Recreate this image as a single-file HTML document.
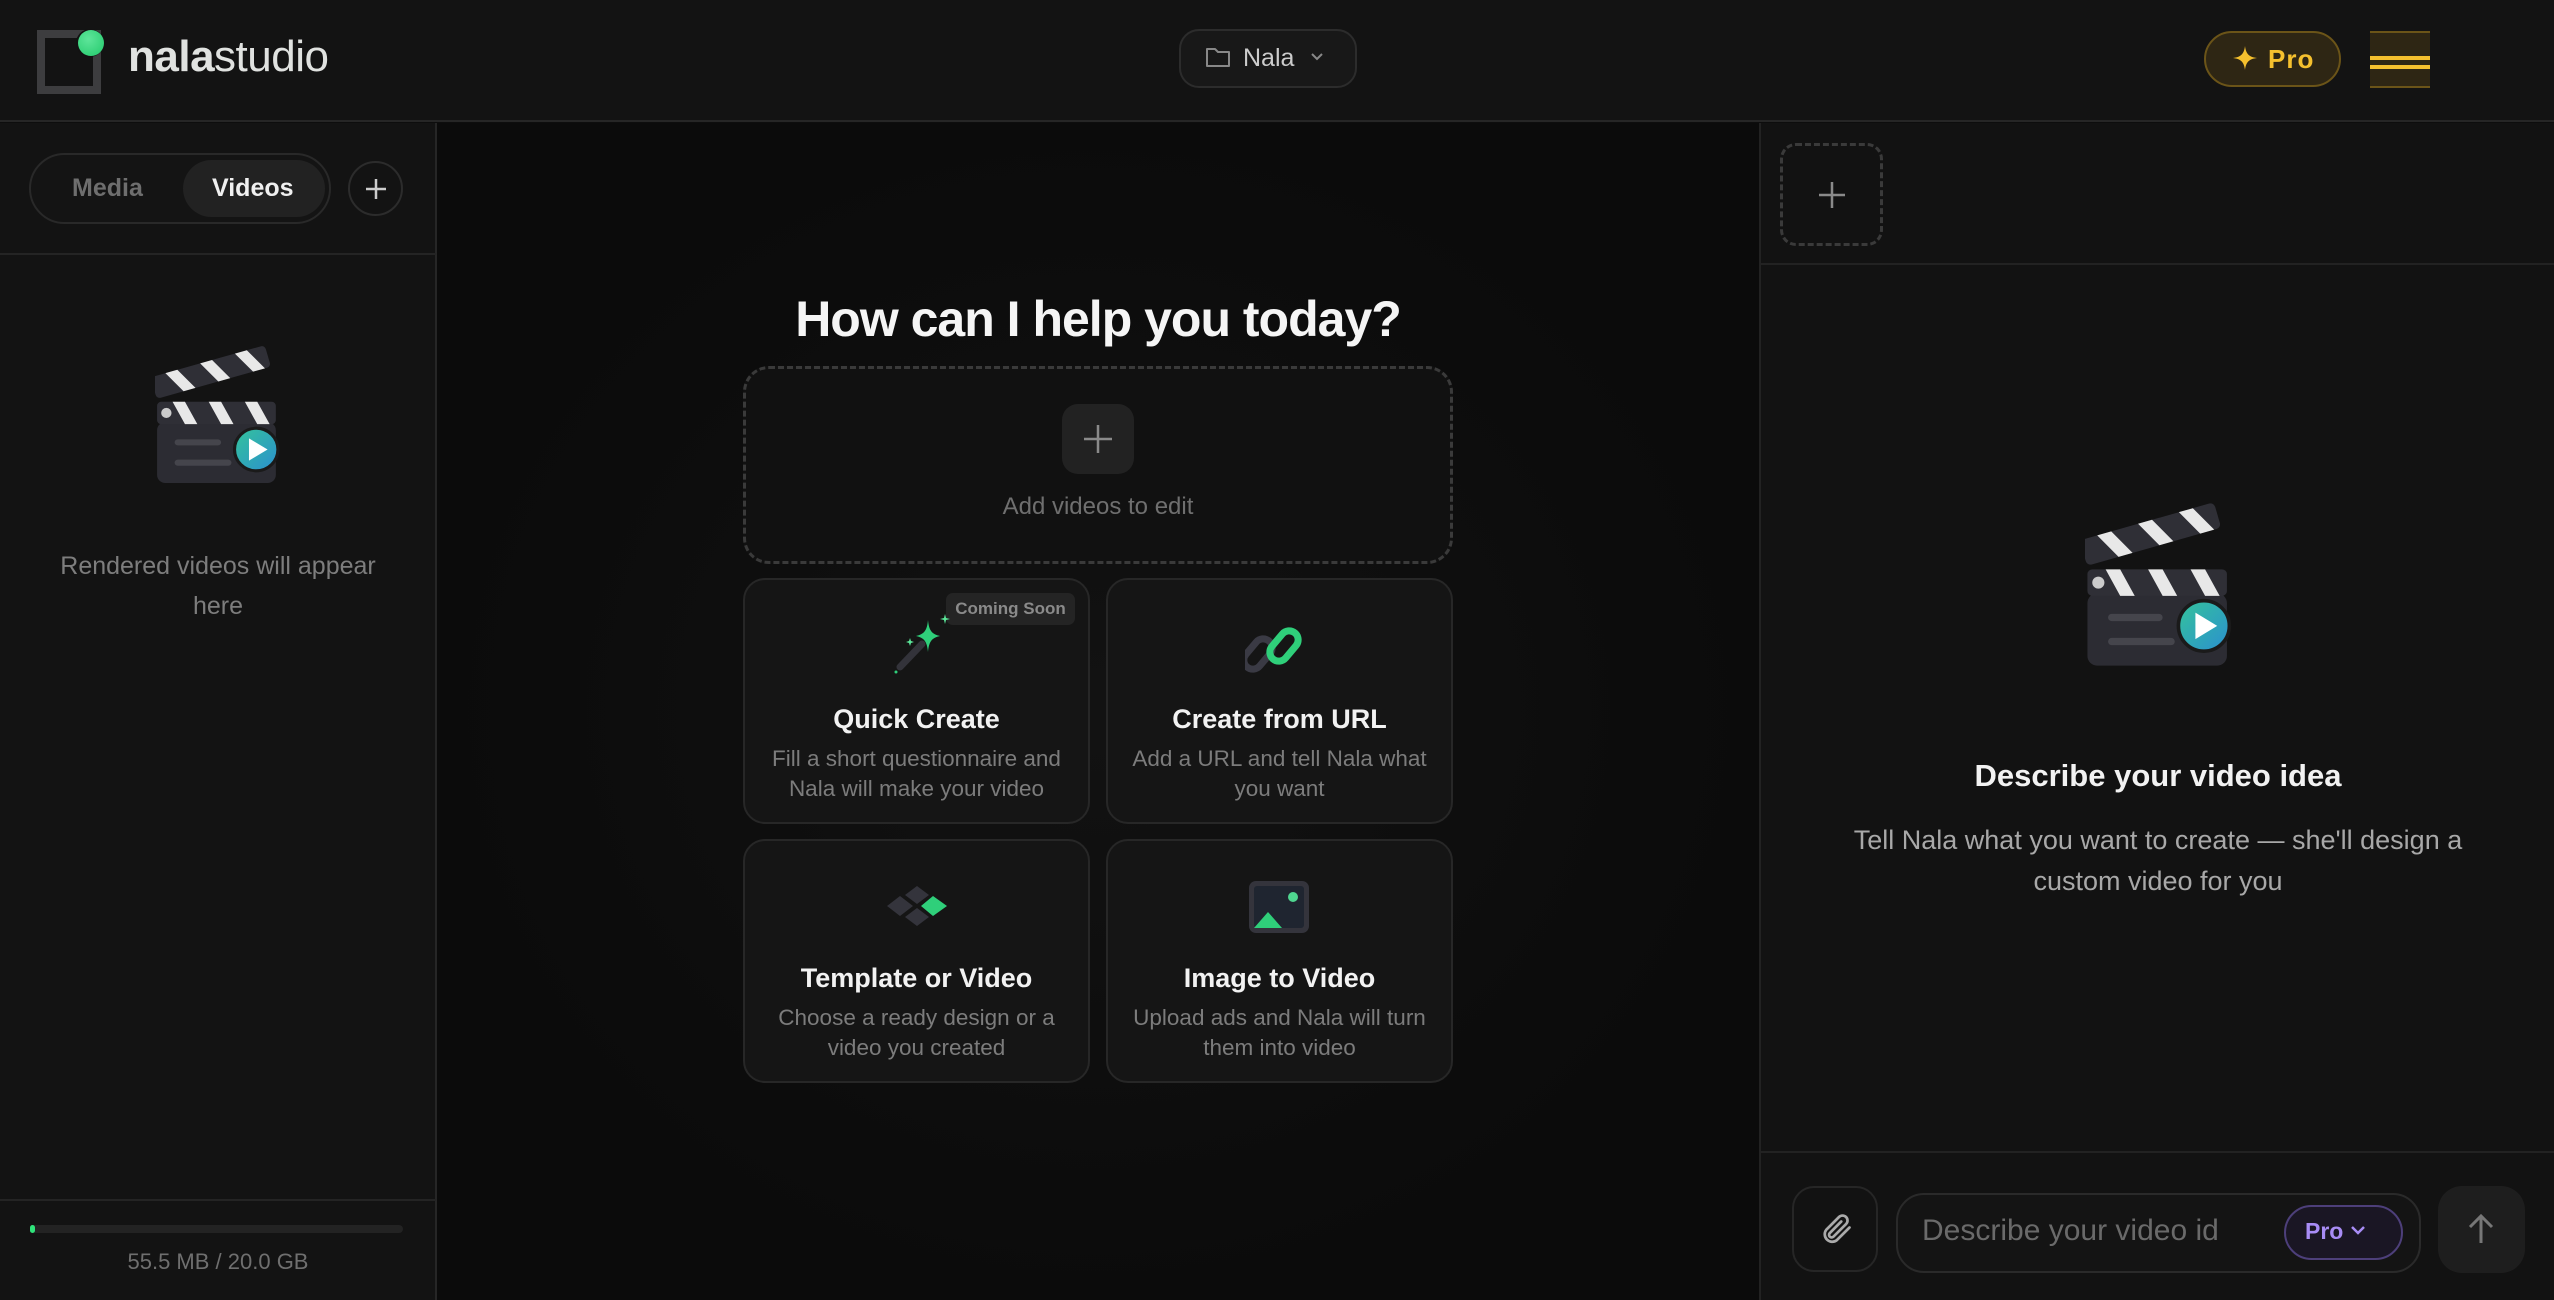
<!DOCTYPE html>
<html><head><meta charset="utf-8"><style>
*{box-sizing:border-box;margin:0;padding:0}
body{width:2554px;height:1300px;overflow:hidden;background:#0d0d0d;font-family:"Liberation Sans",sans-serif;color:#eee;position:relative}
.abs{position:absolute}
.hdr{left:0;top:0;width:2554px;height:122px;background:#131313;border-bottom:2px solid #262626}
.side{left:0;top:123px;width:437px;height:1177px;background:#131313;border-right:2px solid #262626}
.right{left:1759px;top:123px;width:795px;height:1177px;background:#121212;border-left:2px solid #222}
.center{left:437px;top:123px;width:1322px;height:1177px;background:radial-gradient(ellipse at 50% 50%,#121212,#0b0b0b 70%)}
.card{width:347px;background:#151515;border:2px solid #272727;border-radius:22px;text-align:center}
.card h3{position:absolute;left:0;right:0;font-size:27px;font-weight:bold;color:#f2f2f2}
.card p{position:absolute;left:0;right:0;font-size:22.5px;line-height:30px;color:#7c7c7c}
</style></head><body>
<div class="abs hdr"></div>
<div class="abs side"></div>
<div class="abs center"></div>
<div class="abs right"></div>

<svg width="0" height="0" style="position:absolute"><defs>
<linearGradient id="g1" x1="0" y1="0" x2="1" y2="1"><stop offset="0" stop-color="#34c49a"/><stop offset="1" stop-color="#2b8fd0"/></linearGradient>
<g id="clap">
<rect x="30" y="90" width="115" height="60" rx="8" fill="#2c2c33"/>
<rect x="30" y="70" width="115" height="22" rx="4" fill="#2f2f36"/>
<path d="M45 70l12 22h12l-12-22zM80 70l12 22h12l-12-22zM115 70l12 22h12l-12-22z" fill="#e8e8e8"/>
<circle cx="39" cy="81" r="5" fill="#ccc"/>
<g transform="rotate(-16 30 68)"><rect x="30" y="45" width="115" height="22" rx="4" fill="#2f2f36"/>
<path d="M45 45l12 22h12l-12-22zM80 45l12 22h12l-12-22zM115 45l12 22h12l-12-22z" fill="#e8e8e8"/></g>
<rect x="47" y="107" width="45" height="6" rx="3" fill="#45454c"/><rect x="47" y="127" width="55" height="6" rx="3" fill="#45454c"/>
<circle cx="126" cy="117" r="21" fill="url(#g1)" stroke="#1a1a1a" stroke-width="3"/>
<path d="M119 106v22l18-11z" fill="#fff"/>
</g></defs></svg>

<!-- logo -->
<div class="abs" style="left:37px;top:30px;width:64px;height:64px;border:8px solid #3d3d3f"></div>
<div class="abs" style="left:76px;top:29px;width:28px;height:28px;background:#121212;border-radius:50%"></div>
<div class="abs" style="left:78px;top:30px;width:26px;height:26px;background:radial-gradient(circle at 40% 35%,#5ee59a,#22c96b);border-radius:50%"></div>
<div class="abs" style="left:128px;top:32px;font-size:44px;color:#e0e2e0;letter-spacing:-0.5px"><b>nala</b>studio</div>

<!-- Nala dropdown -->
<div class="abs" style="left:1179px;top:29px;width:178px;height:59px;border:2px solid #2c2c2c;border-radius:20px;background:#181818"></div>
<svg class="abs" style="left:1205px;top:46px" width="26" height="22" viewBox="0 0 26 22"><path d="M2 3h8l3 3h11v14H2z" fill="none" stroke="#888" stroke-width="2" stroke-linejoin="round"/></svg>
<div class="abs" style="left:1243px;top:44px;font-size:25px;color:#ccc">Nala</div>
<svg class="abs" style="left:1310px;top:52px" width="14" height="10"><path d="M2 2l5 5 5-5" stroke="#888" stroke-width="2" fill="none"/></svg>

<!-- Pro -->
<div class="abs" style="left:2204px;top:31px;width:137px;height:56px;border:2px solid #6b5418;border-radius:28px;background:#2e2614"></div>
<svg class="abs" style="left:2233px;top:46px" width="24" height="24" viewBox="0 0 24 24"><path d="M12 0C13 8 16 11 24 12 16 13 13 16 12 24 11 16 8 13 0 12 8 11 11 8 12 0z" fill="#f5c02e"/></svg>
<div class="abs" style="left:2268px;top:44px;font-size:26px;font-weight:bold;color:#f5c02e;letter-spacing:1px">Pro</div>
<div class="abs" style="left:2370px;top:31px;width:60px;height:57px;background:#2e2614;border-top:2px solid #6b5418;border-bottom:2px solid #6b5418"></div>
<div class="abs" style="left:2370px;top:56px;width:60px;height:4px;background:#f5c02e"></div>
<div class="abs" style="left:2370px;top:65px;width:60px;height:4px;background:#f5c02e"></div>

<!-- tabs -->
<div class="abs" style="left:29px;top:153px;width:302px;height:71px;border:2px solid #292929;border-radius:36px;background:#141414"></div>
<div class="abs" style="left:183px;top:160px;width:142px;height:57px;border-radius:29px;background:#222"></div>
<div class="abs" style="left:72px;top:174px;font-size:25px;font-weight:bold;color:#6e6e6e">Media</div>
<div class="abs" style="left:212px;top:174px;font-size:25px;font-weight:bold;color:#f0f0f0">Videos</div>
<div class="abs" style="left:348px;top:161px;width:55px;height:55px;border:2px solid #2c2c2c;border-radius:50%"></div>
<svg class="abs" style="left:364px;top:177px" width="24" height="24"><path d="M12 2v20M2 12h20" stroke="#ccc" stroke-width="2.5"/></svg>
<div class="abs" style="left:0;top:253px;width:436px;height:2px;background:#242424"></div>

<!-- clapper left -->
<svg class="abs" style="left:155px;top:345px" width="126" height="140" viewBox="28 14 122 138" preserveAspectRatio="none"><use href="#clap"/></svg>
<div class="abs" style="left:20px;width:396px;top:546px;text-align:center;font-size:25px;line-height:40px;color:#7d7d7d">Rendered videos will appear<br>here</div>

<div class="abs" style="left:0;top:1199px;width:436px;height:2px;background:#242424"></div>
<div class="abs" style="left:30px;top:1225px;width:373px;height:8px;border-radius:4px;background:#232323"></div>
<div class="abs" style="left:30px;top:1225px;width:5px;height:8px;border-radius:4px;background:#2fe37a"></div>
<div class="abs" style="left:0;width:436px;top:1249px;text-align:center;font-size:22px;color:#6f6f6f">55.5 MB / 20.0 GB</div>

<!-- center -->
<div class="abs" style="left:743px;width:710px;top:290px;text-align:center;font-size:50px;font-weight:bold;color:#f5f5f5;letter-spacing:-1px">How can I help you today?</div>
<div class="abs" style="left:743px;top:366px;width:710px;height:198px;border:3px dashed #3a3a3a;border-radius:26px;background:#111"></div>
<div class="abs" style="left:1062px;top:404px;width:72px;height:70px;border-radius:16px;background:#222"></div>
<svg class="abs" style="left:1082px;top:423px" width="32" height="32"><path d="M16 2v28M2 16h28" stroke="#8a8a8a" stroke-width="2.5"/></svg>
<div class="abs" style="left:743px;width:710px;top:493px;text-align:center;font-size:24px;color:#6f6f6f">Add videos to edit</div>

<div class="abs card" style="left:743px;top:578px;height:246px">
<h3 style="top:124px">Quick Create</h3><p style="top:164px">Fill a short questionnaire and<br>Nala will make your video</p></div>
<div class="abs" style="left:946px;top:593px;width:129px;height:32px;border-radius:7px;background:#242424;color:#8a8a8a;font-size:17px;font-weight:bold;text-align:center;line-height:32px">Coming Soon</div>
<svg class="abs" style="left:890px;top:612px" width="70" height="65" viewBox="0 0 70 65"><path d="M10 55L32 32" stroke="#33333a" stroke-width="7" stroke-linecap="round"/><path d="M38 8C39 19 42 22 50 24 42 26 39 29 38 40 37 29 34 26 26 24 34 22 37 19 38 8z" fill="#2fcf7a"/><path d="M55 2l1 4 4 1-4 1-1 4-1-4-4-1 4-1z" fill="#5ce89a"/><path d="M20 26l1 3 3 1-3 1-1 3-1-3-3-1 3-1z" fill="#5ce89a"/><circle cx="6" cy="60" r="1.5" fill="#2fcf7a"/></svg>

<div class="abs card" style="left:1106px;top:578px;height:246px">
<h3 style="top:124px">Create from URL</h3><p style="top:164px">Add a URL and tell Nala what<br>you want</p></div>
<svg class="abs" style="left:1245px;top:625px" width="60" height="50" viewBox="0 0 60 50"><rect x="4" y="12" width="18" height="34" rx="9" transform="rotate(40 13 29)" fill="none" stroke="#3a3a44" stroke-width="7"/><rect x="30" y="4" width="18" height="34" rx="9" transform="rotate(40 39 21)" fill="none" stroke="#2fcf7a" stroke-width="7"/></svg>

<div class="abs card" style="left:743px;top:839px;height:244px">
<h3 style="top:122px">Template or Video</h3><p style="top:162px">Choose a ready design or a<br>video you created</p></div>
<svg class="abs" style="left:883px;top:885px" width="66" height="42" viewBox="0 0 66 42"><path d="M4 21l13-10 13 10-13 10z" fill="#34343c"/><path d="M22 10l12-9 12 9-12 9z" fill="#34343c"/><path d="M22 32l12-9 12 9-12 9z" fill="#34343c"/><path d="M38 21l12-10 14 10-14 10z" fill="#2fcf7a"/></svg>

<div class="abs card" style="left:1106px;top:839px;height:244px">
<h3 style="top:122px">Image to Video</h3><p style="top:162px">Upload ads and Nala will turn<br>them into video</p></div>
<svg class="abs" style="left:1247px;top:879px" width="64" height="56" viewBox="0 0 64 56"><rect x="2" y="2" width="60" height="52" rx="7" fill="#34343c"/><rect x="7" y="7" width="50" height="42" rx="3" fill="#1f2530"/><circle cx="46" cy="18" r="5" fill="#4fd690"/><path d="M7 49l14-16 14 16z" fill="#2fcf7a"/></svg>

<!-- right -->
<div class="abs" style="left:1780px;top:143px;width:103px;height:103px;border:3px dashed #3a3a3a;border-radius:16px"></div>
<svg class="abs" style="left:1818px;top:181px" width="28" height="28"><path d="M14 1v26M1 14h26" stroke="#8a8a8a" stroke-width="2.5"/></svg>
<div class="abs" style="left:1760px;top:263px;width:794px;height:2px;background:#222"></div>
<svg class="abs" style="left:2085px;top:502px" width="148" height="166" viewBox="28 14 122 138" preserveAspectRatio="none"><use href="#clap"/></svg>
<div class="abs" style="left:1760px;width:796px;top:758px;text-align:center;font-size:31px;font-weight:bold;color:#f2f2f2">Describe your video idea</div>
<div class="abs" style="left:1760px;width:796px;top:820px;text-align:center;font-size:27px;line-height:41px;color:#a8a8a8">Tell Nala what you want to create — she'll design a<br>custom video for you</div>

<div class="abs" style="left:1760px;top:1151px;width:794px;height:2px;background:#222"></div>
<div class="abs" style="left:1792px;top:1186px;width:86px;height:86px;border:2px solid #262626;border-radius:22px"></div>
<svg class="abs" style="left:1818px;top:1210px" width="36" height="38" viewBox="0 0 24 24"><path d="M21 11l-8.5 8.5a5 5 0 01-7-7L14 4a3.3 3.3 0 014.7 4.7l-8.5 8.5a1.7 1.7 0 01-2.4-2.4L15.5 7" fill="none" stroke="#aaa" stroke-width="1.8" stroke-linecap="round"/></svg>
<div class="abs" style="left:1896px;top:1193px;width:525px;height:80px;border:2px solid #2a2a2a;border-radius:28px;background:#141414"></div>
<div class="abs" style="left:1922px;top:1214px;font-size:30px;color:#6a6a6a">Describe your video id</div>
<div class="abs" style="left:2284px;top:1205px;width:119px;height:55px;border:2px solid #4d3f7a;border-radius:28px;background:#1a1624"></div>
<div class="abs" style="left:2305px;top:1218px;font-size:23px;font-weight:bold;color:#a88cf5">Pro</div>
<svg class="abs" style="left:2350px;top:1225px" width="16" height="12"><path d="M2 2l6 6 6-6" stroke="#a88cf5" stroke-width="2.5" fill="none"/></svg>
<div class="abs" style="left:2438px;top:1186px;width:87px;height:87px;border-radius:24px;background:#1e1e1e"></div>
<svg class="abs" style="left:2466px;top:1213px" width="30" height="32"><path d="M15 30V3M4 14L15 3l11 11" stroke="#777" stroke-width="3" fill="none"/></svg>
</body></html>
